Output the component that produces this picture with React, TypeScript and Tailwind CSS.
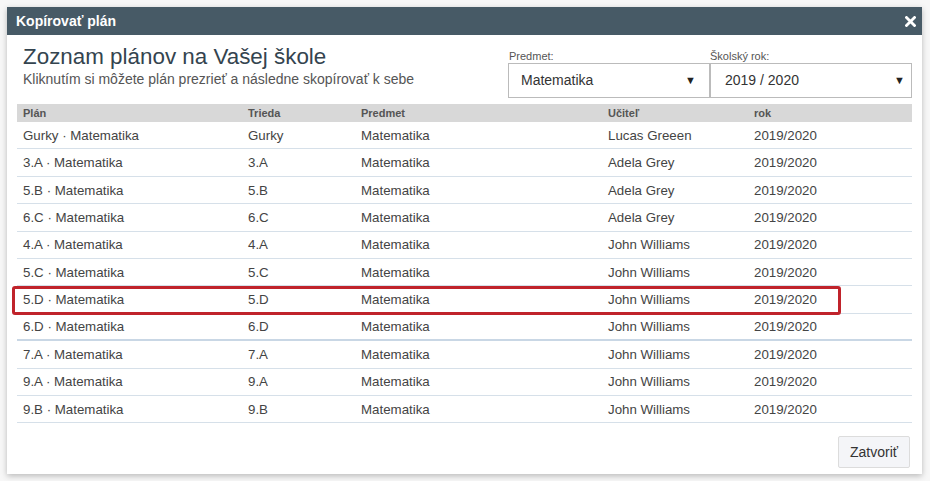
import React from "react";

const rows = [
  ["Gurky · Matematika", "Gurky", "Matematika", "Lucas Greeen", "2019/2020"],
  ["3.A · Matematika", "3.A", "Matematika", "Adela Grey", "2019/2020"],
  ["5.B · Matematika", "5.B", "Matematika", "Adela Grey", "2019/2020"],
  ["6.C · Matematika", "6.C", "Matematika", "Adela Grey", "2019/2020"],
  ["4.A · Matematika", "4.A", "Matematika", "John Williams", "2019/2020"],
  ["5.C · Matematika", "5.C", "Matematika", "John Williams", "2019/2020"],
  ["5.D · Matematika", "5.D", "Matematika", "John Williams", "2019/2020"],
  ["6.D · Matematika", "6.D", "Matematika", "John Williams", "2019/2020"],
  ["7.A · Matematika", "7.A", "Matematika", "John Williams", "2019/2020"],
  ["9.A · Matematika", "9.A", "Matematika", "John Williams", "2019/2020"],
  ["9.B · Matematika", "9.B", "Matematika", "John Williams", "2019/2020"],
];

const cols = ["w-[225px]", "w-[113px]", "w-[247px]", "w-[146px]", "flex-1"];

export default function App() {
  return (
    <div
      className="w-[930px] h-[481px] bg-[#f7f7f7] pt-[7px] pl-[7px] overflow-hidden"
      style={{ fontFamily: '"Liberation Sans", Arial, sans-serif' }}
    >
      <div className="relative w-[915px] h-[467px] bg-white shadow-[0_2px_6px_rgba(0,0,0,0.25)] flex flex-col">
        <div className="h-[28px] bg-[#475a66] flex items-center justify-between pl-[9px] pr-[6px]">
          <span className="text-white font-bold text-[14px]">Kopírovať plán</span>
          <svg width="11" height="11" viewBox="0 0 11 11">
            <path d="M1.5 1.5 L9.5 9.5 M9.5 1.5 L1.5 9.5" stroke="white" strokeWidth="2.8" strokeLinecap="square" />
          </svg>
        </div>
        <div className="px-[10px] flex-1 flex flex-col">
          <div className="h-[69px] flex justify-between">
            <div className="pl-[6px] pt-[9px]">
              <div className="text-[22.4px] leading-[26px] text-[#34444f]">Zoznam plánov na Vašej škole</div>
              <div className="text-[14px] leading-[16px] text-[#555] mt-[1px]">
                Kliknutím si môžete plán prezrieť a následne skopírovať k sebe
              </div>
            </div>
            <div className="flex pt-[15px] pr-0">
              <div className="w-[202px]">
                <div className="text-[11px] leading-[12px] text-[#555] pl-[1px] mb-[1px]">Predmet:</div>
                <div className="h-[35px] border border-[#bbb] flex items-center justify-between pl-[12px] pr-[13px]">
                  <span className="text-[14px] text-[#333]">Matematika</span>
                  <span className="text-[11px] text-[#222]">▼</span>
                </div>
              </div>
              <div className="w-[202px]">
                <div className="text-[11px] leading-[12px] text-[#555] mb-[1px]">Školský rok:</div>
                <div className="h-[35px] border border-[#bbb] flex items-center justify-between pl-[14px] pr-[6px]">
                  <span className="text-[14px] text-[#333]">2019 / 2020</span>
                  <span className="text-[11px] text-[#222]">▼</span>
                </div>
              </div>
            </div>
          </div>
          <div className="flex h-[18px] bg-[#d8d8d8] items-center text-[11px] font-bold text-[#555]">
            {["Plán", "Trieda", "Predmet", "Učiteľ", "rok"].map((h, i) => (
              <div key={h} className={`${cols[i]} pl-[6px]`}>{h}</div>
            ))}
          </div>
          {rows.map((r, ri) => (
            <div
              key={ri}
              className={`flex h-[27.4px] items-center pt-[1px] text-[13.3px] text-[#444] ${
                ri === 7 ? "border-b-2 border-[#c9d7e5]" : "border-b border-[#d6e0e9]"
              }`}
            >
              {r.map((c, i) => (
                <div key={i} className={`${cols[i]} pl-[6px]`}>{c}</div>
              ))}
            </div>
          ))}
          <div className="flex justify-end pt-[13px] pr-[2px]">
            <button className="h-[32px] px-[11px] bg-[#f4f5f8] border border-[#dcdcdc] rounded-[2px] text-[14px] text-[#333]">
              Zatvoriť
            </button>
          </div>
        </div>
        <div className="absolute left-[5px] top-[279px] w-[829px] h-[29px] border-[3px] border-[#c0232b] rounded-[3px]" />
      </div>
    </div>
  );
}
